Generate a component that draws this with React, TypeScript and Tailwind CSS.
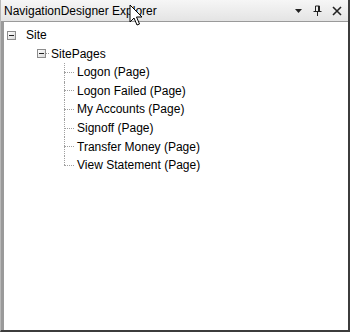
import React from "react";

const pages = [
  "Logon (Page)",
  "Logon Failed (Page)",
  "My Accounts (Page)",
  "Signoff (Page)",
  "Transfer Money (Page)",
  "View Statement (Page)",
];

const MinusBox = () => (
  <span className="flex h-[9px] w-[9px] items-center justify-center border border-[#8c8c8c] bg-gradient-to-br from-white to-[#d8d8d8]">
    <span className="h-px w-[5px] bg-[#222]" />
  </span>
);

const Cursor = () => (
  <svg
    className="absolute left-[129px] top-[4px]"
    width="14"
    height="24"
    viewBox="0 0 14 24"
  >
    <path
      d="M1 1 L1 18 L5 14 L8 21 L10.5 20 L7.5 13 L13 13 Z"
      fill="white"
      stroke="black"
      strokeWidth="1"
      strokeLinejoin="miter"
    />
  </svg>
);

export default function App() {
  return (
    <div
      className="relative h-[332px] w-[350px] bg-[#d4d0c8] text-[12px] text-black"
      style={{ fontFamily: '"Liberation Sans", Arial, sans-serif' }}
    >
      <div className="flex h-full flex-col border-b-2 border-r-2 border-b-[#3c3c3c] border-r-[#3c3c3c] border-l border-l-[#b8b8b8]">
        {/* title bar */}
        <div className="flex h-[22px] items-center justify-between border-b border-[#9a9a9a] bg-gradient-to-b from-[#f6f6f6] to-[#e4e4e4] pl-[3px] pr-[6px]">
          <span>NavigationDesigner Explorer</span>
          <div className="flex items-center gap-[10px]">
            <svg width="9" height="6" viewBox="0 0 9 6">
              <path d="M1 1 L8 1 L4.5 5 Z" fill="#222" />
            </svg>
            <svg width="9" height="11" viewBox="0 0 9 11">
              <path
                d="M2.5 1 H6.5 V6 M2.5 1 V6 M5.5 1 V6 M0.5 6.5 H8.5 M4.5 7 V11"
                stroke="#222"
                strokeWidth="1"
                fill="none"
              />
            </svg>
            <svg width="10" height="10" viewBox="0 0 10 10">
              <path
                d="M1 1 L9 9 M9 1 L1 9"
                stroke="#222"
                strokeWidth="1.6"
              />
            </svg>
          </div>
        </div>
        {/* tree */}
        <div className="flex-1 border-l-[3px] border-l-[#9a9a9a] bg-white pt-[4px]">
          <div className="flex h-[18px] items-center gap-[10px] pl-[3px]">
            <MinusBox />
            <span>Site</span>
          </div>
          <div className="ml-[18px]">
            <div className="flex h-[19px] items-center pl-[15px]">
              <MinusBox />
              <span className="mr-[2px] w-[3px] border-t border-dotted border-[#999]" />
              <span>SitePages</span>
            </div>
            <div className="ml-[42px]">
              {pages.map((p, i) => (
                <div key={p} className="relative flex h-[18.6px] items-center">
                  <span
                    className={
                      "absolute left-0 top-0 w-px border-l border-dotted border-[#a0a0a0] " +
                      (i === pages.length - 1 ? "h-1/2" : "h-full")
                    }
                  />
                  <span className="mr-[3px] w-[10px] border-t border-dotted border-[#a0a0a0]" />
                  <span>{p}</span>
                </div>
              ))}
            </div>
          </div>
        </div>
      </div>
      <Cursor />
    </div>
  );
}
